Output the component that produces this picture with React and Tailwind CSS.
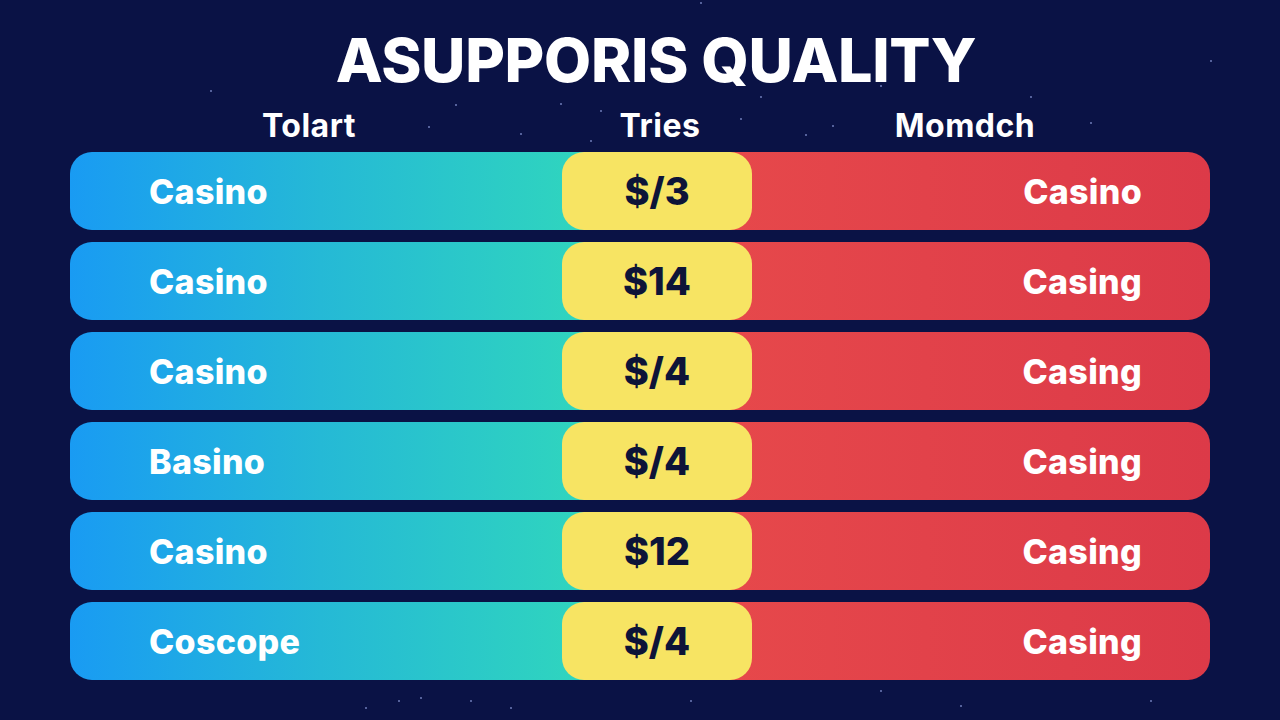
import React from "react";

const rows = [
  ["Casino", "$/3", "Casino"],
  ["Casino", "$14", "Casing"],
  ["Casino", "$/4", "Casing"],
  ["Basino", "$/4", "Casing"],
  ["Casino", "$12", "Casing"],
  ["Coscope", "$/4", "Casing"],
];

const stars = [
  [470, 80], [455, 104], [428, 126], [520, 133], [560, 103], [590, 140], [600, 110],
  [740, 118], [760, 96], [805, 134], [832, 125], [880, 85], [1030, 96], [1090, 122],
  [319, 650], [325, 660], [365, 707], [398, 700], [420, 697], [470, 700], [510, 707],
  [690, 700], [880, 690], [1150, 700], [210, 90], [1210, 60], [960, 705], [700, 2],
];

export default function App() {
  return (
    <div
      className="relative w-[1280px] h-[720px] overflow-hidden bg-[#0a1245] text-white"
      style={{ fontFamily: "Inter, 'Open Sans', sans-serif" }}
    >
      {stars.map(([x, y], i) => (
        <div
          key={i}
          className="absolute w-[2px] h-[2px] rounded-full bg-[#6f7db8]"
          style={{ left: x, top: y }}
        />
      ))}
      <div className="relative flex flex-col items-center pt-[28px]">
        <h1 className="pl-[32px] text-[61px] leading-[64px] font-extrabold tracking-[-0.3px] text-white">
          ASUPPORIS QUALITY
        </h1>
        <div className="w-[1140px] grid grid-cols-[492px_190px_1fr] mt-[8px] h-[52px] items-center text-[32px] font-bold tracking-[0.5px]">
          <div className="text-center pr-[14px]">Tolart</div>
          <div className="text-center pl-[6px]">Tries</div>
          <div className="text-center pr-[32px]">Momdch</div>
        </div>
        <div className="w-[1140px] flex flex-col gap-[12px]">
          {rows.map(([l, m, r], i) => (
            <div
              key={i}
              className="h-[78px] rounded-[22px] grid grid-cols-[492px_190px_1fr] bg-[linear-gradient(to_right,#199bf3_0%,#25b9d6_22%,#2fd4bf_44%,#2fd4bf_50%,#e84b4b_50%,#e2424a_75%,#dc3a48_100%)]"
            >
              <div className="flex items-center pl-[79px] text-[34px] font-extrabold tracking-[0.3px]">{l}</div>
              <div className="flex items-center justify-center rounded-[22px] bg-[#f7e463] text-[#0d1438] text-[38px] font-extrabold">
                {m}
              </div>
              <div className="flex items-center justify-end pr-[68px] text-[34px] font-extrabold tracking-[0.3px]">{r}</div>
            </div>
          ))}
        </div>
      </div>
    </div>
  );
}
